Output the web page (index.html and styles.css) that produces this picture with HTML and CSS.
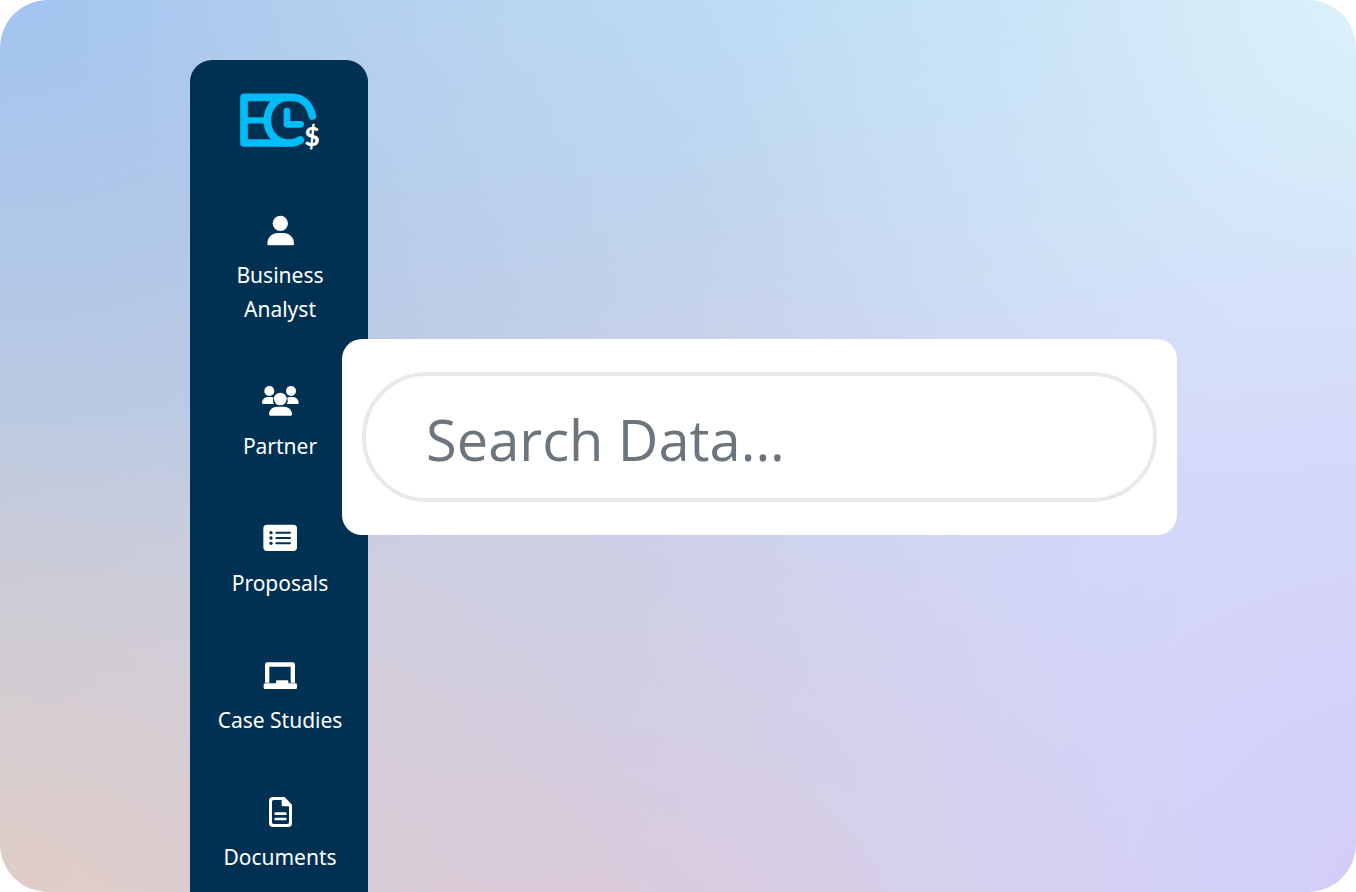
FILE: index.html
```html
<!DOCTYPE html>
<html lang="en">
<head>
    <meta charset="UTF-8">
    <meta name="viewport" content="width=device-width, initial-scale=1.0">
    <title>Search Data</title>
    <link rel="stylesheet" href="styles.css">
</head>
<body>
    <div class="container">
        <aside class="sidebar">
            <svg class="logo" viewBox="60 40 243 180" role="img" aria-label="Logo">
                <g fill="none" stroke="#00bdf7" stroke-width="23" stroke-linecap="round" stroke-linejoin="round">
                    <path d="M277 109C270 76 248 53 217 53H72V190H208Q228 190 241 181"/>
                    <path d="M196 53C160 60 142 90 142 122S160 183 196 190"/>
                    <path d="M72 122H140" stroke-width="19"/>
                    <path d="M201 94V134H242" stroke-width="20"/>
                </g>
                <text class="logo-sign" x="276" y="200" text-anchor="middle">$</text>
            </svg>
            <nav class="menu">
                <a href="#" class="menu-item">
                    <svg class="icon" viewBox="0 0 120 108">
                        <circle cx="61" cy="34" r="23"/>
                        <path d="M22 95C22 76 36 63 54 63H70C88 63 102 76 102 95Q102 100 97 100H27Q22 100 22 95Z"/>
                    </svg>
                    <span>Business Analyst</span>
                </a>
                <a href="#" class="menu-item">
                    <svg class="icon" viewBox="0 0 120 108">
                        <circle cx="28" cy="24" r="15"/>
                        <circle cx="93" cy="24" r="15"/>
                        <circle cx="61" cy="48" r="19"/>
                        <path d="M6 60C6 50 14 42 24 42H32Q37 42 41 44Q36 54 42 63H9Q6 63 6 60Z"/>
                        <path d="M116 60C116 50 108 42 98 42H90Q85 42 81 44Q86 54 80 63H113Q116 63 116 60Z"/>
                        <path d="M27 94C27 80 38 71 52 71H71C85 71 96 80 96 94Q96 98 92 98H31Q27 98 27 94Z"/>
                    </svg>
                    <span>Partner</span>
                </a>
                <a href="#" class="menu-item">
                    <svg class="icon" viewBox="0 0 120 108">
                        <rect x="10" y="14" width="101" height="79" rx="11"/>
                        <g class="cut">
                            <circle cx="33" cy="38" r="5"/>
                            <circle cx="33" cy="54" r="5"/>
                            <circle cx="33" cy="70" r="5"/>
                            <path d="M49 38H90M49 54H90M49 70H90"/>
                        </g>
                    </svg>
                    <span>Proposals</span>
                </a>
                <a href="#" class="menu-item">
                    <svg class="icon" viewBox="0 0 120 108">
                        <path d="M15 77V24Q15 16 23 16H97Q105 16 105 24V77H92V29H28V77Z"/>
                        <path d="M15 79H48V73Q48 70 51 70H82Q85 70 85 73V79H107Q111 79 111 83V92Q111 96 107 96H15Q11 96 11 92V83Q11 79 15 79Z"/>
                    </svg>
                    <span>Case Studies</span>
                </a>
                <a href="#" class="menu-item">
                    <svg class="icon" viewBox="0 0 120 108">
                        <path fill-rule="evenodd" d="M39 9H74L96 32V87Q96 99 84 99H39Q27 99 27 87V21Q27 9 39 9ZM41 18Q36 18 36 23V85Q36 90 41 90H82Q87 90 87 85V37H70Q65 37 65 32V18Z"/>
                        <path d="M47 59H76M47 75H76" class="line"/>
                    </svg>
                    <span>Documents</span>
                </a>
            </nav>
        </aside>
        <form class="search-card">
            <input type="search" class="search-input" placeholder="Search Data..." aria-label="Search Data">
        </form>
    </div>
</body>
</html>
```

FILE: styles.css
```css
* {
    margin: 0;
    padding: 0;
    box-sizing: border-box;
    font-family: 'Noto Sans', 'Open Sans', sans-serif;
}
body {
    background: white;
}
.container {
    display: flex;
    align-items: flex-start;
    height: 100vh;
    padding: 60px 179px 0 190px;
    border-radius: 48px;
    overflow: hidden;
    background:
        radial-gradient(ellipse 50% 60% at 0% 105%, #e3cdc5, rgba(226, 205, 198, 0.4) 50%, rgba(226, 205, 198, 0)),
        radial-gradient(ellipse 50% 60% at 43% 110%, #dec9da, rgba(222, 201, 218, 0.4) 50%, rgba(222, 201, 218, 0)),
        radial-gradient(ellipse 65% 80% at 105% 100%, #d2ccf8, rgba(210, 204, 248, 0.5) 50%, rgba(210, 204, 248, 0)),
        radial-gradient(ellipse 50% 60% at 102% 0%, #dbf1fa, rgba(218, 240, 250, 0.4) 50%, rgba(218, 240, 250, 0)),
        radial-gradient(ellipse 60% 55% at 62% -10%, #b9dff7, rgba(185, 222, 246, 0.5) 50%, rgba(185, 222, 246, 0)),
        radial-gradient(ellipse 65% 75% at 0% -5%, #a0c4f1, rgba(160, 196, 241, 0.5) 50%, rgba(160, 196, 241, 0)),
        linear-gradient(100deg, #c6cbd9, #cad1e8 50%, #d5e0fa 85%);
}
.sidebar {
    flex: none;
    width: 178px;
    height: 100%;
    padding: 33px 24px 0 26px;
    border-radius: 22px 22px 0 0;
    background: #003153;
    text-align: center;
    overflow: hidden;
}
.logo {
    display: block;
    width: 81px;
    height: 60px;
    margin: 0 auto 59px;
}
.logo-sign {
    font-family: Lato, sans-serif;
    font-size: 78px;
    font-weight: 900;
    fill: white;
}
.menu {
    display: flex;
    flex-direction: column;
    gap: 57px;
}
.menu-item {
    display: flex;
    flex-direction: column;
    align-items: center;
    gap: 10px;
    color: white;
    font-size: 21px;
    line-height: 34px;
    text-decoration: none;
}
.icon {
    width: 40px;
    height: 36px;
    fill: white;
}
.cut {
    fill: #003153;
    stroke: #003153;
}
.cut circle {
    stroke: none;
}
.cut path {
    stroke-width: 6;
    stroke-linecap: round;
}
.line {
    stroke: white;
    stroke-width: 8;
    stroke-linecap: round;
}
.search-card {
    flex: 1;
    margin: 279px 0 0 -26px;
    padding: 33px 20px;
    border-radius: 20px;
    background: white;
    position: relative;
}
.search-input {
    display: block;
    width: 100%;
    height: 130px;
    padding: 4px 60px 0;
    border: 4px solid #e8e9e9;
    border-radius: 65px;
    background: white;
    color: #6c757d;
    font-family: 'Open Sans', sans-serif;
    font-size: 56px;
    outline: none;
    appearance: none;
}
.search-input::placeholder {
    color: #6c757d;
    opacity: 1;
}
```
